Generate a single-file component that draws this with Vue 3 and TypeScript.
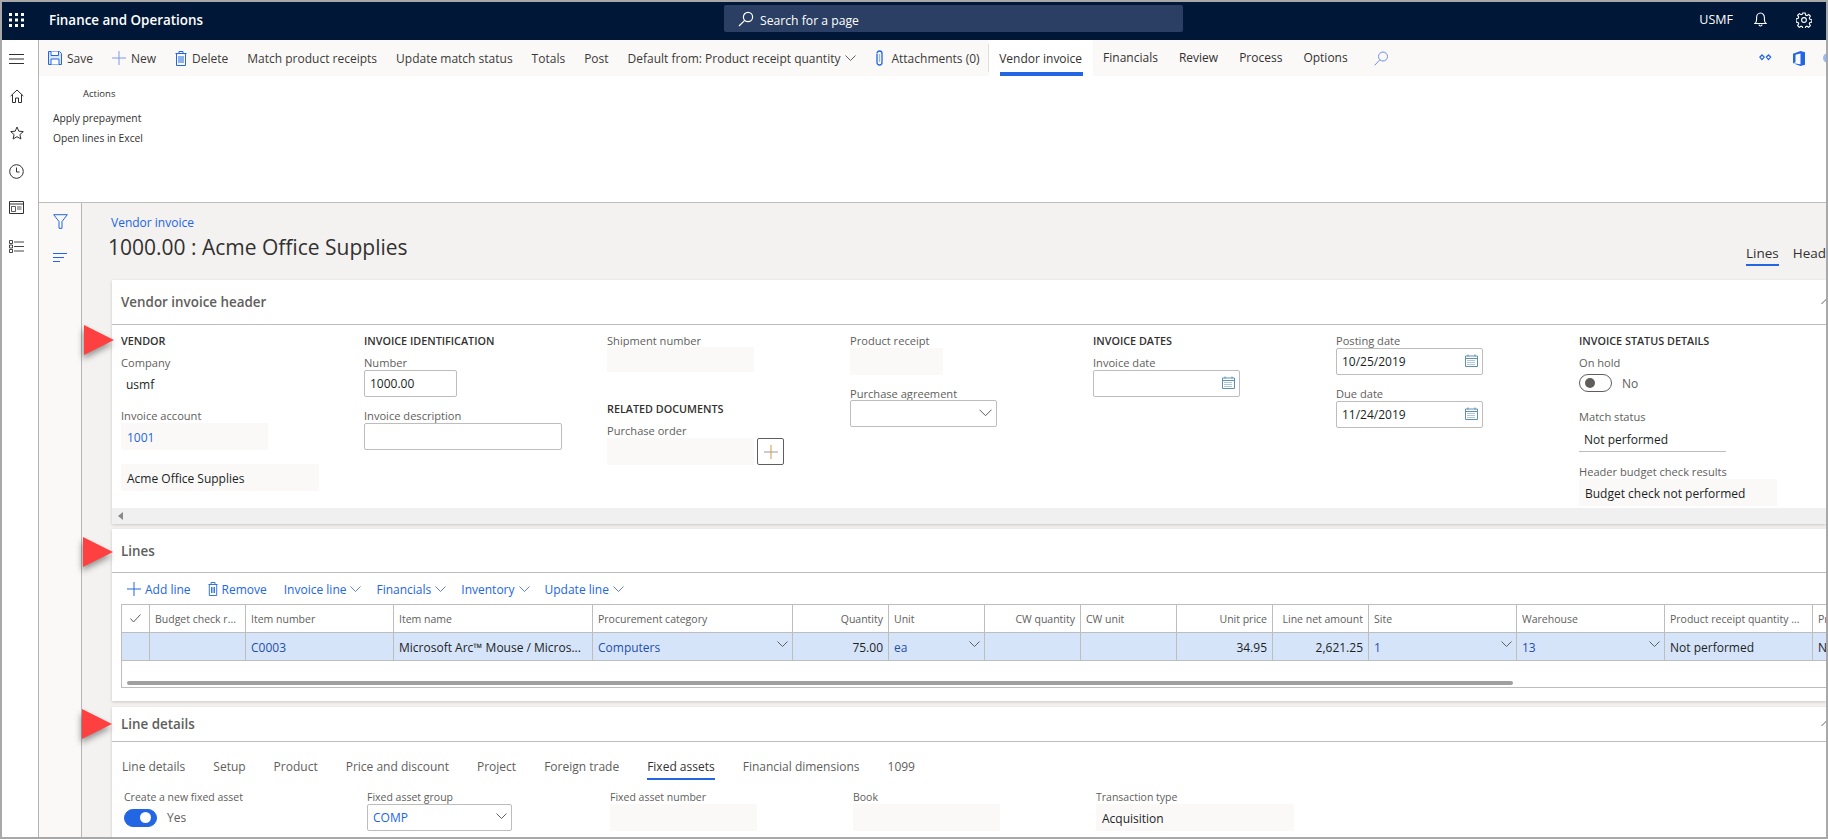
<template>
  <div class="frame">
    <!-- top navigation -->
    <header class="nav">
      <svg class="waffle" width="15" height="14" viewBox="0 0 15 14">
        <g fill="#fff">
          <rect x="0" y="0" width="3" height="3" /><rect x="6" y="0" width="3" height="3" /><rect x="12" y="0" width="3" height="3" />
          <rect x="0" y="5.5" width="3" height="3" /><rect x="6" y="5.5" width="3" height="3" /><rect x="12" y="5.5" width="3" height="3" />
          <rect x="0" y="11" width="3" height="3" /><rect x="6" y="11" width="3" height="3" /><rect x="12" y="11" width="3" height="3" />
        </g>
      </svg>
      <span class="brand">Finance and Operations</span>
      <div class="search">
        <svg width="16" height="16" viewBox="0 0 16 16" fill="none" stroke="#fff" stroke-width="1.2">
          <circle cx="10" cy="6" r="4.6" /><path d="M6.7 9.3 1 15" />
        </svg>
        <span>Search for a page</span>
      </div>
      <div class="nav-right">
        <span class="company">USMF</span>
        <svg class="bell" width="13" height="15" viewBox="0 0 13 15" fill="none" stroke="#fff" stroke-width="1.1">
          <path d="M1 11.5h11c-1.2-1-1.6-2-1.6-4V5.5C10.400 3 8.700 1 6.500 1S2.600 3 2.600 5.500v2c0 2-.4 3-1.600 4Z" />
          <path d="M5 12.500a1.500 1.500 0 0 0 3 0" />
        </svg>
        <svg class="gear" width="16" height="16" viewBox="0 0 16 16" fill="none" stroke="#fff" stroke-width="1.1">
          <circle cx="8" cy="8" r="2.400" />
          <path d="M6.800 1h2.400l.4 2 1.300.6 1.800-1.100 1.700 1.700-1.100 1.800.6 1.300 2 .4v2.400l-2 .4-.6 1.300 1.100 1.800-1.700 1.700-1.800-1.100-1.300.6-.4 2H6.800l-.4-2-1.300-.6-1.800 1.100-1.700-1.700 1.100-1.800-.6-1.300-2-.4V6.800l2-.4.600-1.300-1.100-1.800 1.700-1.700 1.800 1.100 1.300-.6Z" />
        </svg>
      </div>
    </header>

    <div class="body">
      <!-- left navigation rail -->
      <aside class="rail">
        <svg class="r-menu" width="15" height="10" viewBox="0 0 15 10" stroke="#323130" stroke-width="1"><path d="M0 .5h15M0 5h15M0 9.500h15" /></svg>
        <svg class="r-home" width="14" height="14" viewBox="0 0 14 14" fill="none" stroke="#323130"><path d="M.7 7 7 1l6.300 6M2.500 5.500v8h3V9h3v4.500h3v-8" /></svg>
        <svg class="r-star" width="14" height="14" viewBox="0 0 14 14" fill="none" stroke="#323130"><path d="m7 1 1.800 4.200 4.500.4-3.400 3 1 4.400L7 10.700 3.100 13l1-4.400-3.400-3 4.500-.4Z" /></svg>
        <svg class="r-clock" width="15" height="15" viewBox="0 0 15 15" fill="none" stroke="#323130"><circle cx="7.500" cy="7.500" r="6.800" /><path d="M7.500 3.500v4.500h3" /></svg>
        <svg class="r-card" width="15" height="13" viewBox="0 0 15 13" fill="none" stroke="#323130"><path d="M.5.500h14v12H.5zM.5 3h14" /><path d="M2.500 5.500h4v5h-4zM8 6h4.500M8 8h4.500" stroke-width=".8" /></svg>
        <svg class="r-list" width="15" height="13" viewBox="0 0 15 13" fill="none" stroke="#323130"><path d="M.5.500h3v3h-3zM.5 5h3v3h-3zM.5 9.500h3v3h-3zM5 2h10M5 6.500h10M5 11h10" stroke-width=".9" /></svg>
      </aside>

      <main class="main">
        <!-- action pane -->
        <div class="actionbar">
          <span class="act"><svg width="14" height="14" viewBox="0 0 14 14" fill="#dce7fb" stroke="#2266e3"><path d="M.5.500h11l2 2v11H.5z" /><path d="M3 .5v4h7.500v-4M3 13.500V8h8v5.500" fill="#fff" /></svg>Save</span>
          <span class="act"><svg width="14" height="14" viewBox="0 0 14 14" stroke="#7f9be6"><path d="M7 0v14M0 7h14" /></svg>New</span>
          <span class="act"><svg width="12" height="15" viewBox="0 0 12 15" fill="none" stroke="#2266e3"><path d="M.5 2.500h11M4 2.500V.5h4v2M1.500 2.500v12h9v-12M4 5v7M6 5v7M8 5v7" /></svg>Delete</span>
          <span class="act">Match product receipts</span>
          <span class="act">Update match status</span>
          <span class="act">Totals</span>
          <span class="act">Post</span>
          <span class="act">Default from: Product receipt quantity<svg class="chev" width="11" height="7" viewBox="0 0 11 7" fill="none" stroke="#605e5c"><path d="m.5.500 5 5 5-5" /></svg></span>
          <span class="act"><svg width="9" height="16" viewBox="0 0 9 16" fill="none" stroke="#2266e3" stroke-width="1.300"><path d="M2 4v8.500a2.500 2.500 0 0 0 5 0V3.500a2.500 2.500 0 0 0-5 0" /><path d="M4.500 4v8" stroke="#9db8ef" /></svg>Attachments (0)</span>
          <span class="tab-sep"></span>
          <span class="tab active">Vendor invoice</span>
          <span class="tab">Financials</span>
          <span class="tab">Review</span>
          <span class="tab">Process</span>
          <span class="tab">Options</span>
          <svg class="bar-search" width="14" height="15" viewBox="0 0 14 15" fill="none" stroke="#6f8fe8"><circle cx="9" cy="5.500" r="4.500" /><path d="M5.800 8.800.7 14.300" /></svg>
          <div class="bar-right">
            <svg width="13" height="9" viewBox="0 0 13 9" fill="#2266e3"><path d="M3 0 6 3 3 6.500 0 3ZM9.500 0l3 3-3 3.500-3-3.500Z" /><path d="M3 2 4.500 3.200 3 4.600 1.600 3.200ZM9.500 2 11 3.200 9.500 4.600 8 3.200Z" fill="#fff" /></svg>
            <svg width="12" height="15" viewBox="0 0 12 15" fill="#2266e3"><path d="M0 2.800 7.500 0 12 1.300v12.400L7.500 15 0 12.200l7.500 1V2.500L2.500 3.800v7.400L0 12.200Z" /></svg>
            <span class="bar-dot"></span>
          </div>
        </div>

        <!-- opened Vendor invoice tab -->
        <div class="actions-panel">
          <div class="panel-title">Actions</div>
          <div class="panel-item">Apply prepayment</div>
          <div class="panel-item">Open lines in Excel</div>
        </div>

        <div class="workspace">
          <div class="filter-rail">
            <svg class="f-filter" width="15" height="15" viewBox="0 0 15 15" fill="none" stroke="#2266e3"><path d="M.7.700h13.600L9 7.500V14.300H6V7.500Z" /></svg>
            <svg class="f-lines" width="14" height="9" viewBox="0 0 14 9" stroke="#2266e3"><path d="M0 .5h14M0 4.500h11M0 8.500h7" /></svg>
          </div>

          <div class="page">
            <div class="page-head">
              <div>
                <a class="crumb">Vendor invoice</a>
                <h1>1000.00 : Acme Office Supplies</h1>
              </div>
              <div class="view-tabs">
                <span class="view-tab active">Lines</span>
                <span class="view-tab">Header</span>
              </div>
            </div>

            <!-- header fast tab -->
            <section class="card card-header">
              <div class="card-title tall">
                Vendor invoice header
                <svg class="collapse" width="11" height="7" viewBox="0 0 11 7" fill="none" stroke="#605e5c"><path d="m.5 6 5-5 5 5" /></svg>
              </div>
              <div class="form">
                <div class="col">
                  <div class="group">VENDOR</div>
                  <label class="lbl mt8">Company</label>
                  <div class="val plain"><span>usmf</span></div>
                  <label class="lbl mt12">Invoice account</label>
                  <div class="val ro w147 link">1001</div>
                  <div class="val ro w198 mt14">Acme Office Supplies</div>
                </div>

                <div class="col">
                  <div class="group">INVOICE IDENTIFICATION</div>
                  <label class="lbl mt8">Number</label>
                  <div class="val box w93">1000.00</div>
                  <label class="lbl mt12">Invoice description</label>
                  <div class="val box w198"></div>
                </div>

                <div class="col">
                  <label class="lbl">Shipment number</label>
                  <div class="val ro w147 short"></div>
                  <div class="group mt30">RELATED DOCUMENTS</div>
                  <label class="lbl mt8">Purchase order</label>
                  <div class="po">
                    <div class="val ro w147"></div>
                    <button class="add-btn">
                      <svg width="14" height="14" viewBox="0 0 14 14"><path d="M7 0v14" stroke="#d39a3c" /><path d="M0 7h14" stroke="#9a9a9a" /></svg>
                    </button>
                  </div>
                </div>

                <div class="col">
                  <label class="lbl">Product receipt</label>
                  <div class="val ro w93"></div>
                  <label class="lbl mt12">Purchase agreement</label>
                  <div class="val box w147 lift">
                    <svg class="end" width="13" height="8" viewBox="0 0 13 8" fill="none" stroke="#605e5c"><path d="m.5.700 6 6 6-6" /></svg>
                  </div>
                </div>

                <div class="col">
                  <div class="group">INVOICE DATES</div>
                  <label class="lbl mt8">Invoice date</label>
                  <div class="val box w147">
                    <svg class="end cal" width="13" height="13" viewBox="0 0 13 13" fill="none" stroke="#5f8fb4"><path d="M.5 2h12v10.500H.5zM.5 4.500h12M3 .5v2M10 .5v2" /><path d="M2.500 6.500h8M2.500 8.500h8M2.500 10.500h8" stroke-dasharray="1 1" /></svg>
                  </div>
                </div>

                <div class="col">
                  <label class="lbl">Posting date</label>
                  <div class="val box w147">
                    10/25/2019
                    <svg class="end cal" width="13" height="13" viewBox="0 0 13 13" fill="none" stroke="#5f8fb4"><path d="M.5 2h12v10.500H.5zM.5 4.500h12M3 .5v2M10 .5v2" /><path d="M2.500 6.500h8M2.500 8.500h8M2.500 10.500h8" stroke-dasharray="1 1" /></svg>
                  </div>
                  <label class="lbl mt12">Due date</label>
                  <div class="val box w147">
                    11/24/2019
                    <svg class="end cal" width="13" height="13" viewBox="0 0 13 13" fill="none" stroke="#5f8fb4"><path d="M.5 2h12v10.500H.5zM.5 4.500h12M3 .5v2M10 .5v2" /><path d="M2.500 6.500h8M2.500 8.500h8M2.500 10.500h8" stroke-dasharray="1 1" /></svg>
                  </div>
                </div>

                <div class="col">
                  <div class="group">INVOICE STATUS DETAILS</div>
                  <label class="lbl mt8">On hold</label>
                  <div class="toggle-row">
                    <span class="toggle"><i></i></span>
                    <span>No</span>
                  </div>
                  <label class="lbl mt13">Match status</label>
                  <div class="val under">Not performed</div>
                  <label class="lbl mt13">Header budget check results</label>
                  <div class="val ro w198">Budget check not performed</div>
                </div>
              </div>
              <div class="hscroll"><i></i></div>
            </section>

            <!-- lines fast tab -->
            <section class="card card-lines">
              <div class="card-title mid">Lines</div>
              <div class="toolbar">
                <span class="tool"><svg width="14" height="14" viewBox="0 0 14 14" stroke="#2266e3"><path d="M7 0v14M0 7h14" /></svg>Add line</span>
                <span class="tool"><svg width="10" height="14" viewBox="0 0 10 14" fill="none" stroke="#2266e3"><path d="M.5 2.500h9M3 2.500V.5h4v2M1.300 2.500v11h7.400v-11M3.500 5v6M5 5v6M6.500 5v6" stroke-width=".9" /></svg>Remove</span>
                <span v-for="m in menus" :key="m" class="tool">
                  {{ m }}
                  <svg width="11" height="7" viewBox="0 0 11 7" fill="none" stroke="#5f7fc9"><path d="m.5.500 5 5 5-5" /></svg>
                </span>
              </div>
              <div class="grid">
                <div class="g-head">
                  <div class="g-cell check" style="width: 28px">
                    <svg width="11" height="9" viewBox="0 0 11 9" fill="none" stroke="#605e5c"><path d="m.5 4.500 3 3.500 7-7.500" /></svg>
                  </div>
                  <div v-for="c in columns" :key="c.title" class="g-cell" :class="{ num: c.num }" :style="{ width: c.w + 'px' }">
                    <span>{{ c.title }}</span>
                  </div>
                </div>
                <div class="g-row">
                  <div class="g-cell" style="width: 28px"></div>
                  <div v-for="c in columns" :key="c.title" class="g-cell" :class="{ num: c.num, glink: c.link }" :style="{ width: c.w + 'px' }">
                    <span>{{ c.value }}</span>
                    <svg v-if="c.drop" class="end" width="11" height="7" viewBox="0 0 11 7" fill="none" stroke="#605e5c"><path d="m.5.500 5 5 5-5" /></svg>
                  </div>
                </div>
                <div class="g-scroll"><i></i></div>
              </div>
            </section>

            <!-- line details fast tab -->
            <section class="card card-details">
              <div class="card-title small">
                Line details
                <svg class="collapse" width="11" height="7" viewBox="0 0 11 7" fill="none" stroke="#605e5c"><path d="m.5 6 5-5 5 5" /></svg>
              </div>
              <div class="sub-tabs">
                <span v-for="t in detailTabs" :key="t" class="sub-tab" :class="{ active: t === 'Fixed assets' }">{{ t }}</span>
              </div>
              <div class="form details">
                <div class="col">
                  <label class="lbl">Create a new fixed asset</label>
                  <div class="toggle-row yes">
                    <span class="toggle on"><i></i></span>
                    <span>Yes</span>
                  </div>
                </div>
                <div class="col">
                  <label class="lbl">Fixed asset group</label>
                  <div class="val box w146 link">
                    COMP
                    <svg class="end" width="11" height="7" viewBox="0 0 11 7" fill="none" stroke="#605e5c"><path d="m.5.500 5 5 5-5" /></svg>
                  </div>
                </div>
                <div class="col">
                  <label class="lbl">Fixed asset number</label>
                  <div class="val ro w147"></div>
                </div>
                <div class="col">
                  <label class="lbl">Book</label>
                  <div class="val ro w147"></div>
                </div>
                <div class="col">
                  <label class="lbl">Transaction type</label>
                  <div class="val ro w198">Acquisition</div>
                </div>
              </div>
            </section>
          </div>
        </div>
      </main>
    </div>

    <!-- callout arrows on top of the screenshot -->
    <svg class="arrow a1" width="30" height="30" viewBox="0 0 30 30"><path d="M0 0 30 15 0 30Z" /></svg>
    <svg class="arrow a2" width="30" height="30" viewBox="0 0 30 30"><path d="M0 0 30 15 0 30Z" /></svg>
    <svg class="arrow a3" width="30" height="30" viewBox="0 0 30 30"><path d="M0 0 30 15 0 30Z" /></svg>
  </div>
</template>

<script setup lang="ts">
interface Column {
  title: string;
  w: number;
  value?: string;
  num?: boolean;
  link?: boolean;
  drop?: boolean;
}

const menus = ["Invoice line", "Financials", "Inventory", "Update line"];

const detailTabs = [
  "Line details",
  "Setup",
  "Product",
  "Price and discount",
  "Project",
  "Foreign trade",
  "Fixed assets",
  "Financial dimensions",
  "1099",
];

const columns: Column[] = [
  { title: "Budget check r...", w: 96 },
  { title: "Item number", w: 148, value: "C0003", link: true },
  { title: "Item name", w: 199, value: "Microsoft Arc™ Mouse / Micros..." },
  { title: "Procurement category", w: 200, value: "Computers", link: true, drop: true },
  { title: "Quantity", w: 96, value: "75.00", num: true },
  { title: "Unit", w: 96, value: "ea", link: true, drop: true },
  { title: "CW quantity", w: 96, num: true },
  { title: "CW unit", w: 96 },
  { title: "Unit price", w: 96, value: "34.95", num: true },
  { title: "Line net amount", w: 96, value: "2,621.25", num: true },
  { title: "Site", w: 148, value: "1", link: true, drop: true },
  { title: "Warehouse", w: 148, value: "13", link: true, drop: true },
  { title: "Product receipt quantity ...", w: 148, value: "Not performed" },
  { title: "Product", w: 148, value: "Not performed" },
];
</script>

<style>
html,
body {
  margin: 0;
  overflow: hidden;
}
</style>

<style scoped>
.frame {
  position: relative;
  width: 1828px;
  height: 839px;
  box-sizing: border-box;
  border: 2px solid #a8a8a8;
  display: flex;
  flex-direction: column;
  overflow: hidden;
  font-family: "Open Sans", "Liberation Sans", sans-serif;
  font-size: 12px;
  color: #323130;
  background: #fff;
}

.nav {
  flex: none;
  height: 38px;
  background: #001737;
  color: #fff;
  display: flex;
  align-items: center;
  position: relative;
}

.waffle {
  margin-left: 7px;
  margin-top: -2px;
}

.brand {
  margin-left: 25px;
  font-size: 13.400px;
  font-weight: 600;
  margin-top: -3px;
}

.search {
  position: absolute;
  left: 722px;
  top: 3px;
  width: 459px;
  height: 27px;
  background: #2a3f63;
  border-radius: 2px;
  display: flex;
  align-items: center;
  padding-left: 14px;
  box-sizing: border-box;
  gap: 6px;
  font-size: 12.200px;
}

.search span {
  margin-top: 3px;
}

.nav-right {
  margin-left: auto;
  display: flex;
  align-items: center;
  margin-top: -3px;
}

.company {
  font-size: 12.500px;
  margin-right: 21px;
}

.bell {
  margin-right: 29px;
}

.gear {
  margin-right: 14px;
}

.body {
  flex: 1;
  display: flex;
  min-height: 0;
}

.rail {
  flex: none;
  width: 29px;
  border-right: 1px solid #b5b5b5;
  display: flex;
  flex-direction: column;
  align-items: center;
  padding-right: 7px;
  background: #fff;
}

.r-menu {
  margin-top: 14px;
}
.r-home {
  margin-top: 25px;
}
.r-star {
  margin-top: 23px;
}
.r-clock {
  margin-top: 23.500px;
}
.r-card {
  margin-top: 22px;
}
.r-list {
  margin-top: 26px;
}

.main {
  flex: 1;
  min-width: 0;
  display: flex;
  flex-direction: column;
}

.actionbar {
  flex: none;
  height: 36px;
  background: #faf9f8;
  display: flex;
  align-items: center;
  padding-left: 9px;
  white-space: nowrap;
  color: #3b3a39;
}

.act {
  display: inline-flex;
  align-items: center;
  gap: 5px;
  margin-right: 19px;
}

.act:nth-child(9) {
  margin-right: 8px;
  gap: 7px;
}

.tab-sep {
  width: 1px;
  height: 28px;
  background: #e1dfdd;
}

.tab {
  height: 36px;
  line-height: 36px;
  padding: 0 10.500px;
  position: relative;
  color: #323130;
}

.tab.active {
  background: #fff;
  line-height: 38px;
}

.tab.active::after {
  content: "";
  position: absolute;
  left: 11px;
  right: 10px;
  bottom: 0;
  height: 4px;
  background: #2266e3;
}

.bar-search {
  margin-left: 16px;
}

.bar-right {
  margin-left: auto;
  display: flex;
  align-items: center;
  gap: 21.500px;
  width: 67.500px;
  flex: none;
  overflow: hidden;
}

.bar-right svg {
  flex: none;
}

.bar-dot {
  flex: none;
  width: 10px;
  height: 10px;
  border-radius: 50%;
  background: #9db8ef;
  margin-left: -4px;
}

.actions-panel {
  flex: none;
  height: 127px;
  box-sizing: border-box;
  border-bottom: 1px solid #bdbdbd;
  padding-top: 11px;
  padding-left: 14px;
  font-size: 10.300px;
  background: #fff;
}

.panel-title {
  font-size: 9.500px;
  padding-left: 30px;
  height: 14px;
  line-height: 14px;
  margin-bottom: 7px;
}

.panel-item {
  height: 20px;
  line-height: 20px;
}

.workspace {
  flex: 1;
  display: flex;
  min-height: 0;
  background: #f3f2f1;
}

.filter-rail {
  flex: none;
  width: 42px;
  background: #faf9f8;
  border-right: 1px solid #b5b5b5;
  display: flex;
  flex-direction: column;
  align-items: center;
}

.f-filter {
  margin-top: 11px;
}

.f-lines {
  margin-top: 24px;
}

.page {
  flex: 1;
  min-width: 0;
  padding-left: 30px;
  display: flex;
  flex-direction: column;
  overflow: hidden;
}

.page-head {
  flex: none;
  height: 77px;
  display: flex;
  justify-content: space-between;
  box-sizing: border-box;
  padding-top: 12px;
  position: relative;
}

.crumb {
  display: block;
  margin-left: -1px;
  line-height: 16px;
  color: #2266e3;
}

h1 {
  margin: 3px 0 0 -4px;
  font-size: 21px;
  font-weight: 400;
  line-height: 26px;
  color: #323130;
}

.view-tabs {
  position: absolute;
  left: 1634px;
  top: 41px;
  display: flex;
  gap: 14px;
  font-size: 13.500px;
  white-space: nowrap;
}

.view-tab {
  height: 20px;
  line-height: 18px;
}

.view-tab.active {
  border-bottom: 2px solid #2266e3;
}

.card {
  flex: none;
  background: #fff;
  box-shadow: 0 1px 3px rgba(0, 0, 0, 0.18);
}

.card-title {
  position: relative;
  box-sizing: border-box;
  border-bottom: 1px solid #bdbdbd;
  padding-left: 9px;
  display: flex;
  align-items: center;
  font-size: 13.400px;
  font-weight: 600;
  color: #605e5c;
}

.card-title.tall {
  height: 45px;
}
.card-title.mid {
  height: 44px;
}
.card-title.small {
  height: 35px;
}

.collapse {
  position: absolute;
  right: -6px;
  top: calc(50% - 4px);
}

.card-header {
  height: 244px;
  display: flex;
  flex-direction: column;
}

.form {
  flex: 1;
  display: grid;
  grid-template-columns: repeat(7, 243px);
  padding: 9px 0 0 9px;
}

.col {
  min-width: 0;
  display: flex;
  flex-direction: column;
  align-items: flex-start;
}

.group {
  height: 14px;
  line-height: 14px;
  font-size: 10.800px;
  font-weight: 600;
  color: #323130;
}

.lbl {
  display: block;
  height: 14px;
  line-height: 14px;
  font-size: 11.100px;
  color: #605e5c;
  white-space: nowrap;
}

.mt8 {
  margin-top: 8px;
}
.mt12 {
  margin-top: 12px;
}
.mt13 {
  margin-top: 13px;
}
.mt14 {
  margin-top: 14px;
}
.mt30 {
  margin-top: 30px;
}

.val {
  position: relative;
  height: 27px;
  line-height: 29px;
  box-sizing: border-box;
  padding-left: 6px;
  font-size: 12px;
  color: #201f1e;
  white-space: nowrap;
}

.val.ro {
  background: #faf9f8;
}

.val.box {
  border: 1px solid #bdbdbd;
  border-radius: 2px;
  line-height: 26px;
  padding-left: 5px;
}

.val.plain {
  padding-left: 5px;
}

.val.link {
  color: #2266e3;
}

.val.short {
  height: 25px;
  margin-top: -1px;
}

.val.lift {
  margin-top: -1px;
}

.val.under {
  width: 147px;
  height: 28px;
  line-height: 31px;
  border-bottom: 1px solid #bdbdbd;
  padding-left: 5px;
}

.w93 {
  width: 93px;
}
.w146 {
  width: 145px;
}
.w147 {
  width: 147px;
}
.w198 {
  width: 198px;
}

.end {
  position: absolute;
  right: 4px;
  top: 8px;
}

.end.cal {
  top: 5px;
}

.po {
  display: flex;
  gap: 3px;
}

.add-btn {
  width: 27px;
  height: 27px;
  padding: 0;
  display: flex;
  align-items: center;
  justify-content: center;
  background: #fff;
  border: 1px solid #605e5c;
  border-radius: 2px;
}

.toggle-row {
  height: 27px;
  display: flex;
  align-items: center;
  gap: 10px;
  font-size: 12px;
  color: #605e5c;
}

.toggle {
  width: 33px;
  height: 18px;
  box-sizing: border-box;
  border: 1px solid #605e5c;
  border-radius: 9px;
  display: flex;
  align-items: center;
  padding-left: 5px;
  margin-top: -2px;
}

.toggle i {
  width: 10px;
  height: 10px;
  border-radius: 50%;
  background: #605e5c;
}

.toggle.on {
  background: #2266e3;
  border-color: #2266e3;
  justify-content: flex-end;
  padding: 0 5px 0 0;
}

.toggle.on i {
  background: #fff;
  width: 11px;
  height: 11px;
}

.hscroll {
  flex: none;
  height: 16px;
  background: #f0f0f0;
  display: flex;
  align-items: center;
  padding-left: 6px;
}

.hscroll i {
  width: 0;
  height: 0;
  border-style: solid;
  border-width: 4px 5px 4px 0;
  border-color: transparent #8a8a8a transparent transparent;
}

.card-lines {
  margin-top: 5px;
  height: 172px;
}

.toolbar {
  height: 31px;
  display: flex;
  align-items: center;
  padding-left: 15px;
  padding-top: 1px;
  box-sizing: border-box;
  color: #2266e3;
  white-space: nowrap;
}

.tool {
  display: inline-flex;
  align-items: center;
  gap: 4px;
  margin-right: 17px;
}

.tool:nth-child(n + 3) {
  margin-right: 15px;
}

.grid {
  margin-left: 9px;
  height: 84px;
  box-sizing: border-box;
  border-top: 1px solid #bdbdbd;
  border-left: 1px solid #bdbdbd;
  border-bottom: 1px solid #bdbdbd;
  position: relative;
  overflow: hidden;
}

.g-head,
.g-row {
  display: flex;
  width: 1900px;
  height: 28px;
  box-sizing: border-box;
}

.g-head {
  border-bottom: 1px solid #bdbdbd;
}

.g-row {
  background: #d6e4fa;
  border-bottom: 1px solid #bdbdbd;
}

.g-cell {
  flex: none;
  box-sizing: border-box;
  position: relative;
  border-right: 1px solid #bdbdbd;
  padding: 0 5px;
  line-height: 29px;
  font-size: 12px;
  color: #201f1e;
  white-space: nowrap;
  overflow: hidden;
}

.g-head .g-cell {
  font-size: 10.500px;
  color: #605e5c;
}

.g-cell.num {
  text-align: right;
}

.g-cell.glink {
  color: #1f4fa8;
}

.g-cell.check {
  display: flex;
  align-items: center;
  justify-content: center;
}

.g-scroll {
  position: absolute;
  left: 5px;
  right: 0;
  top: 76px;
}

.g-scroll i {
  display: block;
  width: 1386px;
  height: 4px;
  border-radius: 2px;
  background: #a0a0a0;
}

.card-details {
  margin-top: 6px;
  flex: 1;
}

.sub-tabs {
  padding: 17px 0 0 10px;
  display: flex;
  gap: 28px;
  height: 38px;
  box-sizing: border-box;
  color: #605e5c;
  font-size: 12px;
  white-space: nowrap;
}

.sub-tab {
  height: 21px;
  line-height: 16px;
  box-sizing: border-box;
}

.sub-tab.active {
  color: #323130;
  border-bottom: 2px solid #2266e3;
}

.form.details {
  grid-template-columns: repeat(5, 243px);
  padding: 10px 0 0 12px;
}

.details .lbl {
  font-size: 10.500px;
}

.toggle-row.yes .toggle {
  margin-top: 0;
}

.arrow {
  position: absolute;
  filter: drop-shadow(-1px 4px 3px rgba(0, 0, 0, 0.4));
}

.arrow path {
  fill: #ff4040;
}

.a1 {
  left: 82px;
  top: 323px;
}
.a2 {
  left: 81px;
  top: 535px;
}
.a3 {
  left: 80px;
  top: 707px;
}
</style>
